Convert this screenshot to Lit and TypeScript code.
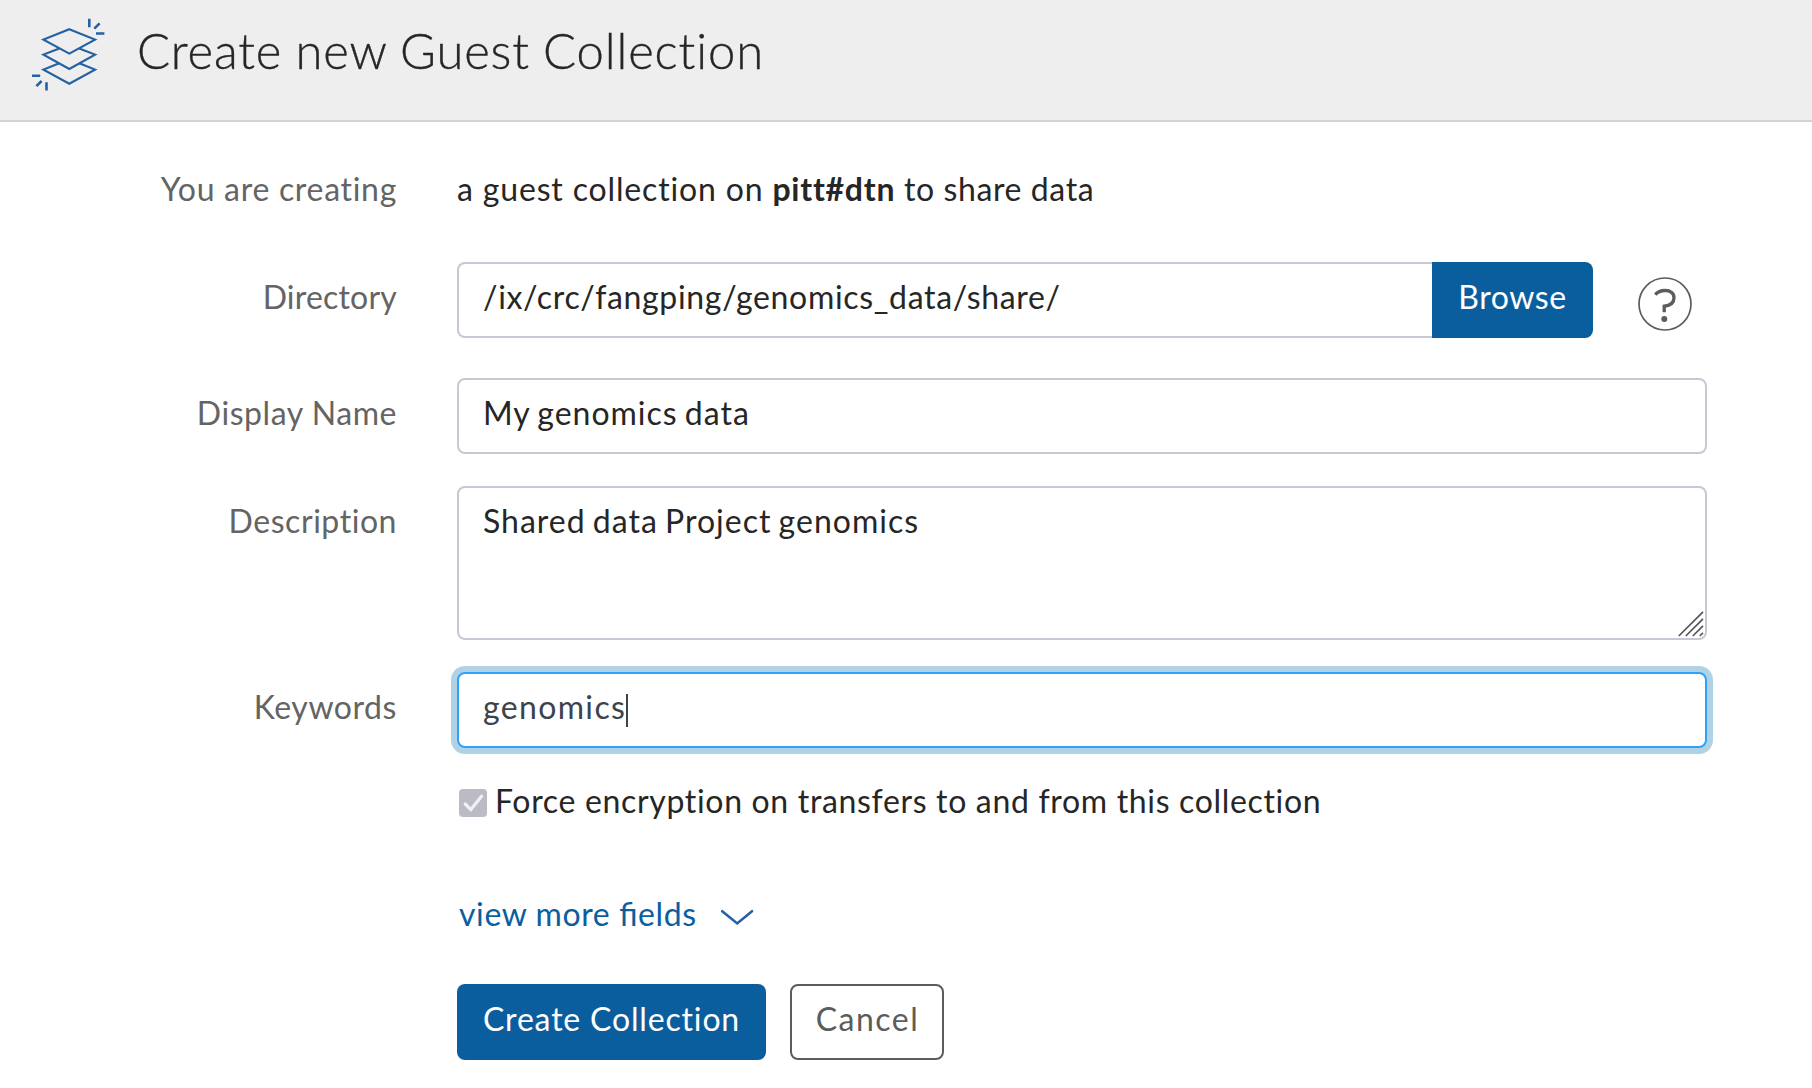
import { LitElement, html, css } from "lit";
import { customElement, state } from "lit/decorators.js";

@customElement("app-root")
export class AppRoot extends LitElement {
  @state() private directory = "/ix/crc/fangping/genomics_data/share/";
  @state() private displayName = "My genomics data";
  @state() private description = "Shared data Project genomics";
  @state() private keywords = "genomics";

  static styles = css`
    :host {
      display: block;
      box-sizing: border-box;
      min-height: 1088px;
      background: #fff;
      color: #262626;
      font: 400 32px/40px Lato, "Open Sans", sans-serif;
      letter-spacing: 0.67px;
    }
    * { box-sizing: border-box; }
    header {
      display: flex;
      align-items: flex-start;
      height: 122px;
      padding: 20px 0 0 32px;
      background: #eee;
      border-bottom: 2px solid #d4d4d4;
    }
    .logo { flex: none; width: 73px; height: 73px; margin-top: -2px; }
    h1 {
      margin: 0 0 0 32px;
      font-weight: 300;
      font-size: 49px;
      line-height: 60px;
      letter-spacing: 0.86px;
      word-spacing: -1px;
      -webkit-text-stroke: 0.35px #262626;
    }
    form { display: flex; flex-direction: column; padding-top: 47px; }
    .row { display: grid; grid-template-columns: 397px 1250px; column-gap: 60px; }
    .label { padding-top: 15px; text-align: right; color: #646464; letter-spacing: 0.55px; }
    .label.plain { padding-top: 0; letter-spacing: 0.7px; }
    .intro { letter-spacing: 0.84px; white-space: pre; }
    .intro b { font-weight: 700; letter-spacing: 0.75px; }
    .intro .tail { letter-spacing: 0.6px; }
    .dir { margin-top: 53px; }
    .name { margin-top: 40px; }
    .desc, .keys { margin-top: 32px; }
    .label.tight { letter-spacing: 0.2px; }
    .field {
      display: block;
      width: 100%;
      height: 76px;
      margin: 0;
      padding: 12px 24px 20px;
      border: 2px solid #c4c9d4;
      border-radius: 8px;
      background: #fff;
      color: #262626;
      font: inherit;
      letter-spacing: 1px;
      word-spacing: -2px;
      outline: none;
    }
    .group { display: flex; align-items: flex-start; }
    .group .field {
      width: 975px;
      border-right: 0;
      border-radius: 8px 0 0 8px;
      letter-spacing: 0.67px;
    }
    .btn {
      flex: none;
      height: 76px;
      margin: 0;
      padding: 0 0 6px;
      border: 0;
      border-radius: 8px;
      background: #0b5e9e;
      color: #fff;
      font: inherit;
      letter-spacing: 0.6px;
      text-align: center;
    }
    .browse { width: 161px; border-radius: 0 8px 8px 0; }
    .help { flex: none; width: 54px; height: 54px; margin: 15px 0 0 45px; }
    .area { position: relative; height: 154px; }
    .area .field { height: 154px; padding-top: 13px; resize: none; overflow: hidden; }
    .grip { position: absolute; right: 3px; bottom: 3px; width: 26px; height: 26px; }
    .focused {
      display: flex;
      padding-top: 13px;
      border-color: #2ea3f7;
      color: #3b444d;
      letter-spacing: 1.35px;
      box-shadow: 0 0 0 6px #b1d2e5;
    }
    .caret { width: 2px; height: 33px; margin-top: 7px; background: #3b444d; }
    .force { display: flex; align-items: flex-start; margin: 33px 0 0 459px; }
    .check { flex: none; width: 28px; height: 28px; margin: 8px 8px 0 0; }
    .more {
      display: flex;
      align-items: flex-start;
      margin: 73px 0 0 459px;
      color: #0b5e9e;
      letter-spacing: 0.6px;
      font-feature-settings: "liga" 1;
    }
    .chevron { width: 34px; height: 20px; margin: 15px 0 0 23.5px; }
    .actions { display: flex; gap: 24px; margin: 50px 0 0 457px; }
    .create { width: 309px; letter-spacing: 0.83px; }
    .cancel {
      width: 154px;
      padding-left: 1px;
      border: 2px solid #5c5c5c;
      background: #fff;
      color: #5c5c5c;
      letter-spacing: 1.5px;
    }
  `;

  render() {
    return html`
      <header>
        <svg class="logo" viewBox="32 18 73 73" fill="none" stroke="#2560a3" stroke-width="2.2">
          <path d="M69.3 29.2 95 39.6 69.3 53.6 43.5 39.6Z" />
          <path d="M59.3 48.4 43.5 54.6 69.3 68.9 95 54.6 79.3 48.4" />
          <path d="M59.3 63.2 43.5 69.6 69.3 83.8 95 69.6 79.3 63.2" />
          <path stroke-width="2.6" d="M89.3 18.7V27.3M94.3 28.6 99.6 23.3M96 33.5H104.4M31.9 75.8H40.2M36.4 86.2 41.6 81M46.5 82.3V90.6" />
        </svg>
        <h1>Create new Guest Collection</h1>
      </header>
      <form @submit=${(e: Event) => e.preventDefault()}>
        <div class="row">
          <div class="label plain">You are creating</div>
          <div class="intro">a guest collection on <b>pitt#dtn</b><span class="tail"> to share data</span></div>
        </div>
        <div class="row dir">
          <div class="label tight">Directory</div>
          <div class="group">
            <input class="field" .value=${this.directory} />
            <button class="btn browse" type="button">Browse</button>
            <svg class="help" viewBox="0 0 54 54" fill="none" stroke="#5c5c5c">
              <circle cx="27" cy="27" r="26" stroke-width="1.7" />
              <path stroke-width="3.3" d="M17.2 17.6C19.6 14.8 23 13.5 27 13.5C32.8 13.5 36 16.3 36 20.8C36 26.2 32.4 28.6 26.2 29.2V35.2" />
              <circle cx="26.3" cy="42" r="3" fill="#5c5c5c" stroke="none" />
            </svg>
          </div>
        </div>
        <div class="row name">
          <div class="label">Display Name</div>
          <input class="field" .value=${this.displayName} />
        </div>
        <div class="row desc">
          <div class="label">Description</div>
          <div class="area">
            <textarea class="field" spellcheck="false" .value=${this.description}></textarea>
            <svg class="grip" viewBox="0 0 26 26" stroke="#555" stroke-width="1.7" fill="none">
              <path d="M.8 25 25 .8M7.8 25 25 7.8M14.8 25 25 14.8M21.8 25 25 21.8" />
            </svg>
          </div>
        </div>
        <div class="row keys">
          <div class="label">Keywords</div>
          <div class="field focused" role="textbox"><span>${this.keywords}</span><i class="caret"></i></div>
        </div>
        <div class="force">
          <svg class="check" viewBox="0 0 28 28">
            <rect width="28" height="28" rx="4" fill="#bbbbc5" />
            <path d="M6.2 15 11.8 20.6 22.6 7.2" fill="none" stroke="#f1f1f3" stroke-width="3.2" stroke-linecap="round" />
          </svg>
          <span>Force encryption on transfers to and from this collection</span>
        </div>
        <div class="more">
          <span>view more fields</span>
          <svg class="chevron" viewBox="0 0 34 20" fill="none" stroke="#2560a3" stroke-width="2.6" stroke-linecap="round">
            <path d="M2.2 2.2 17.2 14.4 32 2.2" />
          </svg>
        </div>
        <div class="actions">
          <button class="btn create" type="submit">Create Collection</button>
          <button class="btn cancel" type="button">Cancel</button>
        </div>
      </form>
    `;
  }
}
